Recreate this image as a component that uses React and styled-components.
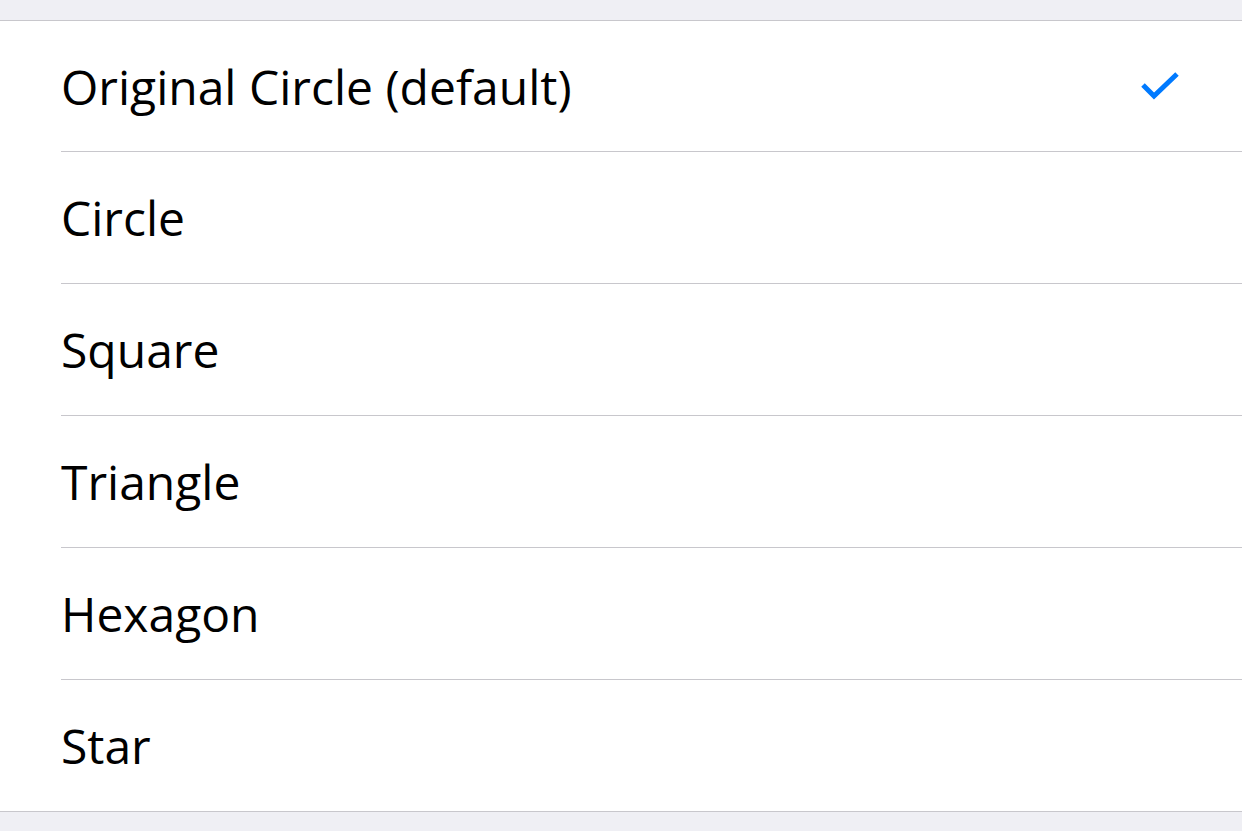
import React from "react";
import styled, { createGlobalStyle } from "styled-components";

const GlobalStyle = createGlobalStyle`
  html, body {
    margin: 0;
    padding: 0;
    background: #efeff4;
  }
  body {
    font-family: "Open Sans", "Noto Sans", sans-serif;
    -webkit-font-smoothing: antialiased;
  }
`;

const Page = styled.div`
  min-height: 831px;
  padding-top: 20px;
  background: #efeff4;
`;

const List = styled.ul`
  list-style: none;
  margin: 0;
  padding: 0 0 0 61px;
  background: #fff;
  border-top: 1px solid #c8c7cc;
  border-bottom: 1px solid #c8c7cc;
`;

const Row = styled.li`
  display: flex;
  align-items: center;
  justify-content: space-between;
  height: 131px;
  padding-right: 62px;
  border-bottom: ${p => (p.last ? "none" : "1px solid #c8c7cc")};

  &:first-child {
    height: 130px;
  }
`;

const Label = styled.span`
  font-size: 48px;
  color: #000;
  letter-spacing: 0;
`;

const Check = () => (
  <svg width="40" height="30" viewBox="0 0 40 30">
    <path
      d="M3 14 L14 25 L37 3"
      fill="none"
      stroke="#007aff"
      strokeWidth="5"
    />
  </svg>
);

const options = [
  { id: 1, text: "Original Circle (default)", selected: true },
  { id: 2, text: "Circle" },
  { id: 3, text: "Square" },
  { id: 4, text: "Triangle" },
  { id: 5, text: "Hexagon" },
  { id: 6, text: "Star" }
];

const App = () => (
  <>
    <GlobalStyle />
    <Page>
      <List>
        {options.map((o, i) => (
          <Row key={o.id} last={i === options.length - 1}>
            <Label>{o.text}</Label>
            {o.selected && <Check />}
          </Row>
        ))}
      </List>
    </Page>
  </>
);

export default App;
